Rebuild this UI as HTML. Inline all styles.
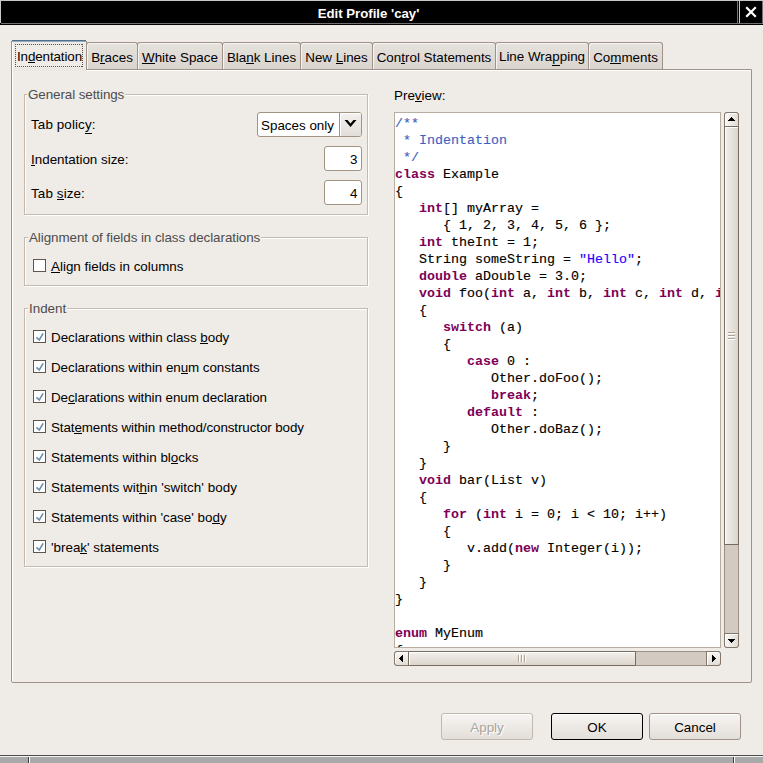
<!DOCTYPE html>
<html><head><meta charset="utf-8"><style>
*{box-sizing:border-box;margin:0;padding:0}
html,body{width:763px;height:763px;overflow:hidden;background:#efebe7;font-family:"Liberation Sans",sans-serif;font-size:13.4px;color:#000}
.a{position:absolute}
.t{position:absolute;white-space:pre;line-height:16px}
u{text-decoration:none;position:relative}
u i{position:absolute;left:0;right:0;height:1px;background:currentColor}
#title{position:absolute;left:0;width:737px;text-align:center;color:#fff;font-weight:bold;font-size:13.2px;line-height:16px}
.tab{position:absolute;top:42px;height:27px;border:1px solid #a09288;border-bottom:none;border-radius:3px 3px 0 0;background:linear-gradient(#e6e2dd,#d9d4ce);box-shadow:inset 1px 1px 0 #f7f5f2}
.grp{position:absolute;border:1px solid #c6baae;box-shadow:inset 1px 1px 0 #fff,1px 1px 0 #fff}
.gt{position:absolute;white-space:pre;line-height:16px;color:#4d4d4d;background:#efebe7;padding:0 1px 0 1px}
.cb{position:absolute;width:13px;height:13px;border:1px solid #5e564d;background:#fff}
.cb svg{position:absolute;left:0;top:0}
.fld{position:absolute;border:1px solid #a39383;border-radius:3px;background:#fff}
.btn{position:absolute;top:713px;height:27px;width:92px;border:1px solid #a09288;border-radius:3px;background:linear-gradient(#f7f5f3,#e3ded8);box-shadow:inset 0 1px 0 #fff}
.bt{position:absolute;left:0;right:0;text-align:center;white-space:pre;line-height:16px}
#ed{left:394px;top:112px;width:327px;height:536px;border:1px solid #b8ada1;background:#fff;overflow:hidden}
#code{position:absolute;left:0;font-family:"Liberation Mono",monospace;font-size:13.33px;line-height:17px;white-space:pre;color:#000;-webkit-text-stroke:0.15px currentColor}
#code b{-webkit-text-stroke:0}
#code b{color:#7f0055}
#code em{font-style:normal;color:#3f5fbf}
#code s{text-decoration:none;color:#2a00ff}
.sbtn{position:absolute;border:1px solid #83776c;background:linear-gradient(90deg,#f9f7f5,#e2dcd5);box-shadow:inset 1px 1px 0 #fff}
.sbtnh{position:absolute;border:1px solid #83776c;background:linear-gradient(#f9f7f5,#e2dcd5);box-shadow:inset 1px 1px 0 #fff}
.thv{position:absolute;border:1px solid #776c61;background:linear-gradient(90deg,#f3f0ec,#dcd5cd);box-shadow:inset 1px 1px 0 #fff}
.thh{position:absolute;border:1px solid #776c61;background:linear-gradient(#f3f0ec,#dcd5cd);box-shadow:inset 1px 1px 0 #fff}
</style></head><body>
<div class="a" style="left:0;top:0;width:763px;height:25px;background:#000"></div>
<div class="a" style="left:0px;top:0px;width:763px;height:1px;background:#c8c8c8"></div>
<div class="a" style="left:0px;top:0px;width:1px;height:23px;background:#c8c8c8"></div>
<div class="a" style="left:1px;top:23px;width:762px;height:1px;background:#707070"></div>
<div class="a" style="left:737px;top:1px;width:1px;height:22px;background:#707070"></div>
<div class="a" style="left:739px;top:1px;width:1px;height:22px;background:#c8c8c8"></div>
<div class="a" style="left:762px;top:1px;width:1px;height:22px;background:#707070"></div>
<div id="title" style="top:6px">Edit Profile 'cay'</div>
<svg class="a" style="left:744px;top:5px" width="14" height="14" viewBox="0 0 14 14"><path d="M3 3L11 11M11 3L3 11" stroke="#fff" stroke-width="2.2" stroke-linecap="square"/></svg>
<div class="a" style="left:11px;top:69px;width:741px;height:614px;border:1px solid #a09288;border-radius:0 0 2px 2px;box-shadow:inset 1px 1px 0 #fff"></div>
<div class="tab" style="left:86px;width:52px"><div class="bt" style="top:7px">B<u>r<i style="top:13px"></i></u>aces</div></div>
<div class="tab" style="left:137px;width:86px"><div class="bt" style="top:7px"><u>W<i style="top:13px"></i></u>hite Space</div></div>
<div class="tab" style="left:222px;width:79px"><div class="bt" style="top:7px">Bla<u>n<i style="top:13px"></i></u>k Lines</div></div>
<div class="tab" style="left:300px;width:73px"><div class="bt" style="top:7px">New <u>L<i style="top:13px"></i></u>ines</div></div>
<div class="tab" style="left:372px;width:124px"><div class="bt" style="top:7px">Con<u>t<i style="top:13px"></i></u>rol Statements</div></div>
<div class="tab" style="left:495px;width:94px"><div class="bt" style="top:6px">Line Wra<u>p<i style="top:16px"></i></u>ping</div></div>
<div class="tab" style="left:588px;width:75px"><div class="bt" style="top:7px">Co<u>m<i style="top:13px"></i></u>ments</div></div>
<div class="a" style="left:11px;top:40px;width:76px;height:30px;border-left:1px solid #a09288;border-right:1px solid #a09288;background:#efebe7;box-shadow:inset 1px 0 0 #fff"></div>
<div class="a" style="left:13px;top:68px;width:73px;height:3px;background:#ebe7e2"></div>
<div class="a" style="left:12px;top:40px;width:74px;height:1px;background:#536f86"></div>
<div class="a" style="left:12px;top:41px;width:74px;height:1px;background:#8eabc3"></div>
<div class="a" style="left:11px;top:40px;width:1px;height:1px;background:#efebe7"></div>
<div class="a" style="left:86px;top:40px;width:1px;height:1px;background:#efebe7"></div>
<div class="a" style="left:15px;top:44px;width:68px;height:1px;background:repeating-linear-gradient(90deg,#55504a 0 1px,transparent 1px 2px)"></div>
<div class="a" style="left:15px;top:66px;width:68px;height:1px;background:repeating-linear-gradient(90deg,#55504a 0 1px,transparent 1px 2px)"></div>
<div class="a" style="left:15px;top:44px;width:1px;height:23px;background:repeating-linear-gradient(#55504a 0 1px,transparent 1px 2px)"></div>
<div class="a" style="left:82px;top:44px;width:1px;height:23px;background:repeating-linear-gradient(#55504a 0 1px,transparent 1px 2px)"></div>
<div class="t" style="left:17px;top:49px;letter-spacing:-0.12px">In<u>d<i style="top:13px"></i></u>entation</div>

<div class="grp" style="left:24px;top:94px;width:344px;height:121px"></div>
<div class="gt" style="left:27px;top:87px;letter-spacing:-0.08px">General settings</div>
<div class="t" style="left:31px;top:117px;letter-spacing:0.12px">Tab polic<u>y<i style="top:16px"></i></u>:</div>

<div class="t" style="left:31px;top:152px;"><u>I<i style="top:13px"></i></u>ndentation size:</div>

<div class="t" style="left:31px;top:186px;letter-spacing:0.12px">Tab <u>s<i style="top:13px"></i></u>ize:</div>

<div class="fld" style="left:257px;top:112px;width:105px;height:25px"></div>
<div class="t" style="left:261px;top:118px;">Spaces only</div>

<div class="a" style="left:339px;top:113px;width:22px;height:23px;border-left:1px solid #a39383;border-radius:0 2px 2px 0;background:linear-gradient(#f4f1ee,#e2ddd7);box-shadow:inset 1px 1px 0 #fff"></div>
<svg class="a" style="left:340px;top:115px" width="20" height="16" viewBox="0 0 20 16"><path d="M4.5 5H7.5L10.5 8.5L13.5 5H16.5L10.5 12Z" fill="#000"/></svg>
<div class="fld" style="left:324px;top:146px;width:38px;height:25px"></div>
<div class="t" style="left:350px;top:152px;">3</div>

<div class="fld" style="left:324px;top:180px;width:38px;height:25px"></div>
<div class="t" style="left:350px;top:186px;">4</div>

<div class="grp" style="left:24px;top:237px;width:344px;height:49px"></div>
<div class="gt" style="left:28px;top:230px;letter-spacing:-0.06px">Alignment of fields in class declarations</div>
<div class="cb" style="left:33px;top:259px"></div>
<div class="t" style="left:51px;top:259px;"><u>A<i style="top:13px"></i></u>lign fields in columns</div>

<div class="grp" style="left:24px;top:308px;width:344px;height:259px"></div>
<div class="gt" style="left:28px;top:301px">Indent</div>
<div class="cb" style="left:33px;top:330px"><svg width="13" height="13" viewBox="0 0 13 13"><path d="M2.4 6.3L5.3 8.9L9.1 2.4" fill="none" stroke="#6f92b0" stroke-width="1.7"/></svg></div>
<div class="t" style="left:51px;top:330px;letter-spacing:-0.04px">Declarations within class <u>b<i style="top:13px"></i></u>ody</div>

<div class="cb" style="left:33px;top:360px"><svg width="13" height="13" viewBox="0 0 13 13"><path d="M2.4 6.3L5.3 8.9L9.1 2.4" fill="none" stroke="#6f92b0" stroke-width="1.7"/></svg></div>
<div class="t" style="left:51px;top:360px;letter-spacing:-0.06px">Declarations within en<u>u<i style="top:13px"></i></u>m constants</div>

<div class="cb" style="left:33px;top:390px"><svg width="13" height="13" viewBox="0 0 13 13"><path d="M2.4 6.3L5.3 8.9L9.1 2.4" fill="none" stroke="#6f92b0" stroke-width="1.7"/></svg></div>
<div class="t" style="left:51px;top:390px;letter-spacing:-0.08px">De<u>c<i style="top:13px"></i></u>larations within enum declaration</div>

<div class="cb" style="left:33px;top:420px"><svg width="13" height="13" viewBox="0 0 13 13"><path d="M2.4 6.3L5.3 8.9L9.1 2.4" fill="none" stroke="#6f92b0" stroke-width="1.7"/></svg></div>
<div class="t" style="left:51px;top:420px;letter-spacing:-0.095px">Stat<u>e<i style="top:13px"></i></u>ments within method/constructor body</div>

<div class="cb" style="left:33px;top:450px"><svg width="13" height="13" viewBox="0 0 13 13"><path d="M2.4 6.3L5.3 8.9L9.1 2.4" fill="none" stroke="#6f92b0" stroke-width="1.7"/></svg></div>
<div class="t" style="left:51px;top:450px;">Statements within bl<u>o<i style="top:13px"></i></u>cks</div>

<div class="cb" style="left:33px;top:480px"><svg width="13" height="13" viewBox="0 0 13 13"><path d="M2.4 6.3L5.3 8.9L9.1 2.4" fill="none" stroke="#6f92b0" stroke-width="1.7"/></svg></div>
<div class="t" style="left:51px;top:480px;letter-spacing:0.045px">Statements wit<u>h<i style="top:13px"></i></u>in 'switch' body</div>

<div class="cb" style="left:33px;top:510px"><svg width="13" height="13" viewBox="0 0 13 13"><path d="M2.4 6.3L5.3 8.9L9.1 2.4" fill="none" stroke="#6f92b0" stroke-width="1.7"/></svg></div>
<div class="t" style="left:51px;top:510px;">Statements within 'case' bo<u>d<i style="top:13px"></i></u>y</div>

<div class="cb" style="left:33px;top:540px"><svg width="13" height="13" viewBox="0 0 13 13"><path d="M2.4 6.3L5.3 8.9L9.1 2.4" fill="none" stroke="#6f92b0" stroke-width="1.7"/></svg></div>
<div class="t" style="left:51px;top:540px;">'brea<u>k<i style="top:13px"></i></u>' statements</div>

<div class="t" style="left:394px;top:88px;">Pre<u>v<i style="top:13px"></i></u>iew:</div>

<div id="ed" class="a"><div id="code" style="top:2.0px"><em>/**</em>
<em> * Indentation</em>
<em> */</em>
<b>class</b> Example
{
   <b>int</b>[] myArray =
      { 1, 2, 3, 4, 5, 6 };
   <b>int</b> theInt = 1;
   String someString = <s>"Hello"</s>;
   <b>double</b> aDouble = 3.0;
   <b>void</b> foo(<b>int</b> a, <b>int</b> b, <b>int</b> c, <b>int</b> d, <b>int</b> e, <b>int</b> f)
   {
      <b>switch</b> (a)
      {
         <b>case</b> 0 :
            Other.doFoo();
            <b>break</b>;
         <b>default</b> :
            Other.doBaz();
      }
   }
   <b>void</b> bar(List v)
   {
      <b>for</b> (<b>int</b> i = 0; i &lt; 10; i++)
      {
         v.add(<b>new</b> Integer(i));
      }
   }
}

<b>enum</b> MyEnum
{</div></div>
<div class="a" style="left:724px;top:112px;width:15px;height:536px;background:#d3cbc2;border:1px solid #9c9186;border-radius:3px"></div>
<div class="sbtn" style="left:724px;top:112px;width:15px;height:15px;border-radius:3px 3px 0 0"></div>
<div class="a" style="left:731px;top:117px;width:1px;height:1px;background:#000"></div><div class="a" style="left:730px;top:118px;width:3px;height:1px;background:#000"></div><div class="a" style="left:729px;top:119px;width:5px;height:1px;background:#000"></div><div class="a" style="left:728px;top:120px;width:7px;height:1px;background:#000"></div>
<div class="thv" style="left:724px;top:126px;width:15px;height:419px"></div>
<div class="a" style="left:728px;top:332px;width:7px;height:1px;background:#b0a394;box-shadow:0 1px 0 #fff,0 3px 0 #b0a394,0 4px 0 #fff,0 6px 0 #b0a394,0 7px 0 #fff"></div>
<div class="sbtn" style="left:724px;top:633px;width:15px;height:15px;border-radius:0 0 3px 3px"></div>
<div class="a" style="left:728px;top:639px;width:7px;height:1px;background:#000"></div><div class="a" style="left:729px;top:640px;width:5px;height:1px;background:#000"></div><div class="a" style="left:730px;top:641px;width:3px;height:1px;background:#000"></div><div class="a" style="left:731px;top:642px;width:1px;height:1px;background:#000"></div>
<div class="a" style="left:394px;top:651px;width:327px;height:15px;background:#d3cbc2;border:1px solid #9c9186;border-radius:3px"></div>
<div class="sbtnh" style="left:394px;top:651px;width:15px;height:15px;border-radius:3px 0 0 3px"></div>
<div class="a" style="left:399px;top:658px;width:1px;height:1px;background:#000"></div><div class="a" style="left:400px;top:657px;width:1px;height:3px;background:#000"></div><div class="a" style="left:401px;top:656px;width:1px;height:5px;background:#000"></div><div class="a" style="left:402px;top:655px;width:1px;height:7px;background:#000"></div>
<div class="thh" style="left:408px;top:651px;width:228px;height:15px"></div>
<div class="a" style="left:518px;top:655px;width:1px;height:7px;background:#b0a394;box-shadow:1px 0 0 #fff,3px 0 0 #b0a394,4px 0 0 #fff,6px 0 0 #b0a394,7px 0 0 #fff"></div>
<div class="sbtnh" style="left:706px;top:651px;width:15px;height:15px;border-radius:0 3px 3px 0"></div>
<div class="a" style="left:712px;top:655px;width:1px;height:7px;background:#000"></div><div class="a" style="left:713px;top:656px;width:1px;height:5px;background:#000"></div><div class="a" style="left:714px;top:657px;width:1px;height:3px;background:#000"></div><div class="a" style="left:715px;top:658px;width:1px;height:1px;background:#000"></div>
<div class="btn" style="left:441px;border-color:#c3b8ad"><div class="bt" style="top:6px;color:#aaa49d;text-shadow:1px 1px 0 #fff">Apply</div></div>
<div class="btn" style="left:551px;border-color:#000"><div class="bt" style="top:6px">OK</div></div>
<div class="btn" style="left:649px"><div class="bt" style="top:6px">Cancel</div></div>
<div class="a" style="left:0;top:755px;width:763px;height:1px;background:#4a4a4a"></div>
<div class="a" style="left:0;top:756px;width:763px;height:1px;background:#f4f4f4"></div>
<div class="a" style="left:0;top:757px;width:763px;height:6px;background:#a9a9a9"></div>
<div class="a" style="left:28px;top:757px;width:1px;height:6px;background:#3c3c3c"></div>
<div class="a" style="left:29px;top:757px;width:1px;height:6px;background:#fff"></div>
<div class="a" style="left:733px;top:757px;width:1px;height:6px;background:#3c3c3c"></div>
<div class="a" style="left:734px;top:757px;width:1px;height:6px;background:#fff"></div>
</body></html>
